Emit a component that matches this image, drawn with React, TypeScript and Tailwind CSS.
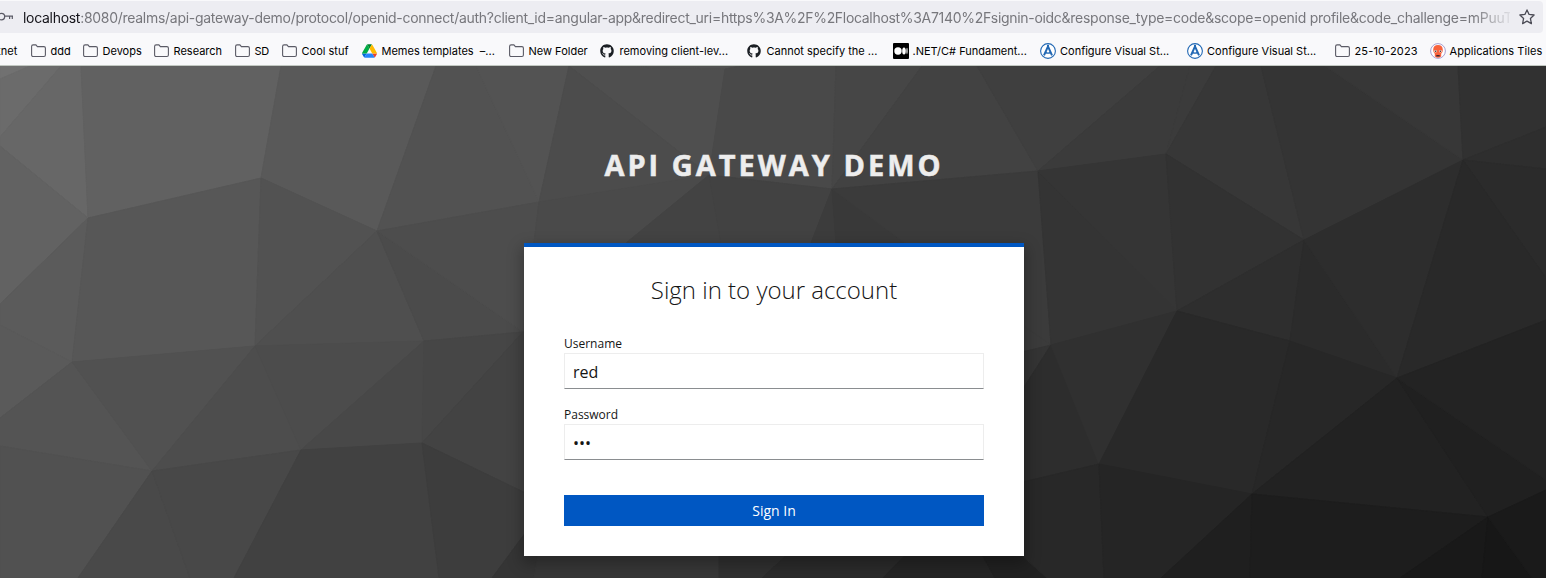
import type { ReactNode } from "react";
import { FaGithub } from "react-icons/fa";

type Facet = [string, string];

/* Low-poly backdrop, in page pixels below the toolbar (origin at y = 66). */
const facets: Facet[] = [
  ["#717171", "0,60 44,60 0,79"],
  ["#6b6b6b", "30,66 61,66 0,137 0,79"],
  ["#676767", "61,66 81,66 88,218 0,146 0,137"],
  ["#616161", "81,66 281,66 261,178 88,218"],
  ["#595959", "281,66 436,66 377,231 261,178"],
  ["#525252", "436,66 476,66 539,202 377,231"],
  ["#535353", "476,66 569,66 539,202"],
  ["#515151", "569,66 740,66 725,69"],
  ["#4f4f4f", "569,66 725,69 709,175"],
  ["#4c4c4c", "569,66 709,175 539,202"],
  ["#494949", "740,66 836,66 832,189 709,175 725,69"],
  ["#464646", "836,66 922,66 832,189"],
  ["#424242", "922,66 977,66 1038,171 832,189"],
  ["#3f3f3f", "977,66 1160,66 1038,171"],
  ["#3b3b3b", "1160,66 1190,66 1166,154 1038,171"],
  ["#3b3b3b", "1190,66 1216,66 1166,154"],
  ["#373737", "1216,66 1261,66 1304,240 1166,154"],
  ["#343434", "1261,66 1325,66 1463,160 1304,240"],
  ["#373737", "1325,66 1458,66 1463,160"],
  ["#313131", "1458,66 1546,66 1546,127 1463,160"],
  ["#2e2e2e", "1463,160 1546,127 1546,169"],
  ["#2b2b2b", "1463,160 1546,169 1546,278"],
  ["#626262", "0,146 88,218 0,304"],
  ["#5b5b5b", "88,218 72,362 0,325 0,304"],
  ["#575757", "88,218 261,178 255,346 72,362"],
  ["#525252", "261,178 377,231 255,346"],
  ["#4f4f4f", "377,231 424,341 255,346"],
  ["#4b4b4b", "377,231 523,332 424,341"],
  ["#4d4d4d", "377,231 539,202 523,332"],
  ["#4a4a4a", "539,202 709,175 626,243 523,332"],
  ["#434343", "709,175 721,243 626,243"],
  ["#424242", "709,175 832,189 811,243 721,243"],
  ["#3c3c3c", "832,189 836,243 811,243"],
  ["#393939", "832,189 905,243 836,243"],
  ["#3b3b3b", "832,189 1038,171 1051,345 905,243"],
  ["#343434", "1038,171 1177,311 1051,345"],
  ["#353535", "1038,171 1166,154 1177,311"],
  ["#323232", "1166,154 1304,240 1177,311"],
  ["#2e2e2e", "1304,240 1290,341 1177,311"],
  ["#2b2b2b", "1304,240 1397,378 1290,341"],
  ["#2d2d2d", "1304,240 1463,160 1397,378"],
  ["#292929", "1463,160 1546,278 1546,320 1397,378"],
  ["#5a5a5a", "0,325 72,362 0,418"],
  ["#545454", "72,362 152,471 0,446 0,418"],
  ["#515151", "72,362 255,346 152,471"],
  ["#4d4d4d", "255,346 301,450 152,471"],
  ["#4c4c4c", "255,346 424,341 301,450"],
  ["#484848", "424,341 422,443 301,450"],
  ["#464646", "424,341 523,332 422,443"],
  ["#434343", "523,332 540,332 540,500 422,443"],
  ["#515151", "0,446 152,471 78,578 0,578"],
  ["#494949", "152,471 190,578 78,578"],
  ["#484848", "152,471 301,450 234,578 190,578"],
  ["#414141", "301,450 422,443 439,578 234,578"],
  ["#3d3d3d", "422,443 540,500 540,513 492,578 439,578"],
  ["#353535", "540,513 540,540 534,578 492,578"],
  ["#373737", "540,540 719,540 719,578 534,578"],
  ["#303030", "719,540 803,540 762,578 719,578"],
  ["#2b2b2b", "803,540 920,540 883,578 762,578"],
  ["#252525", "920,540 974,540 995,578 883,578"],
  ["#212121", "974,540 1006,540 1047,578 995,578"],
  ["#343434", "1010,355 1051,345 1010,409"],
  ["#2d2d2d", "1051,345 1099,464 1010,485 1010,409"],
  ["#303030", "1051,345 1177,311 1099,464"],
  ["#292929", "1177,311 1290,341 1252,494 1099,464"],
  ["#272727", "1290,341 1397,378 1252,494"],
  ["#222222", "1397,378 1488,517 1252,494"],
  ["#202020", "1397,378 1546,480 1546,490 1488,517"],
  ["#232323", "1397,378 1546,320 1546,480"],
  ["#282828", "1010,485 1099,464 1104,578 1047,578 1010,545"],
  ["#252525", "1099,464 1252,494 1161,578 1104,578"],
  ["#1f1f1f", "1252,494 1250,578 1161,578"],
  ["#1d1d1d", "1252,494 1488,517 1400,578 1250,578"],
  ["#191919", "1488,517 1482,578 1400,578"],
  ["#171717", "1488,517 1532,578 1482,578"],
  ["#1a1a1a", "1488,517 1546,490 1546,578 1532,578"],
];

function Backdrop() {
  return (
    <svg
      className="absolute inset-x-0 top-0 h-full w-full"
      viewBox="0 66 1546 512"
      preserveAspectRatio="none"
      aria-hidden="true"
    >
      <rect x="0" y="66" width="1546" height="512" fill="#3b3b3b" />
      {facets.map(([fill, points]) => (
        <polygon key={points} points={points} fill={fill} stroke={fill} strokeWidth="1" />
      ))}
    </svg>
  );
}

function FolderIcon() {
  return (
    <svg className="h-[14px] w-[15px] shrink-0" viewBox="0 0 15 14" fill="none" stroke="#5b5b66" strokeWidth="1.1">
      <path d="M.6 11V2.4Q.6 .9 2.1 .9H4.9L6.4 2.6H12.9Q14.4 2.6 14.4 4.1V11Q14.4 12.5 12.9 12.5H2.1Q.6 12.5 .6 11Z" />
    </svg>
  );
}

function DriveIcon() {
  return (
    <svg className="h-[14px] w-[15px] shrink-0" viewBox="0 0 87.3 78">
      <path d="m6.6 66.85 3.85 6.65c.8 1.4 1.95 2.5 3.3 3.3l13.75-23.8h-27.5c0 1.55.4 3.1 1.2 4.5z" fill="#0066da" />
      <path d="m43.65 25-13.75-23.8c-1.35.8-2.5 1.9-3.3 3.3l-25.4 44a9.06 9.06 0 0 0 -1.2 4.5h27.5z" fill="#00ac47" />
      <path d="m73.55 76.8c1.35-.8 2.5-1.9 3.3-3.3l1.6-2.75 7.65-13.25c.8-1.4 1.2-2.95 1.2-4.5h-27.5l5.85 11.5z" fill="#ea4335" />
      <path d="m43.65 25 13.75-23.8c-1.35-.8-2.9-1.2-4.5-1.2h-18.5c-1.6 0-3.15.45-4.5 1.2z" fill="#00832d" />
      <path d="m59.8 53h-32.3l-13.75 23.8c1.35.8 2.9 1.2 4.5 1.2h50.8c1.6 0 3.15-.45 4.5-1.2z" fill="#2684fc" />
      <path d="m73.4 26.5-12.7-22c-.8-1.4-1.95-2.5-3.3-3.3l-13.75 23.8 16.15 28h27.45c0-1.55-.4-3.1-1.2-4.5z" fill="#ffba00" />
    </svg>
  );
}

function MediumIcon() {
  return (
    <svg className="h-4 w-4 shrink-0" viewBox="0 0 16 16">
      <rect width="16" height="16" rx="1" fill="#000" />
      <circle cx="5" cy="8" r="3.7" fill="#fff" />
      <ellipse cx="11" cy="8" rx="1.8" ry="3.6" fill="#fff" />
      <ellipse cx="14" cy="8" rx=".6" ry="3.2" fill="#fff" />
    </svg>
  );
}

function CompassIcon() {
  return (
    <svg className="h-4 w-4 shrink-0" viewBox="0 0 16 16" fill="none" stroke="#2268b4">
      <circle cx="8" cy="8" r="7.4" strokeWidth="1.1" fill="#fff" />
      <path d="M4 12.4 8 3.4 12 12.4" strokeWidth="2" />
      <path d="M5.4 9.3Q8 10.9 10.6 9.3" strokeWidth="1.4" />
      <path d="M8 2V5" strokeWidth="2" />
    </svg>
  );
}

function MascotIcon() {
  return (
    <svg className="h-4 w-4 shrink-0" viewBox="0 0 16 16">
      <circle cx="8" cy="8" r="7.4" fill="#fff" stroke="#9d93c8" strokeWidth=".9" />
      <path d="M3.2 7Q3.2 2 8 2T12.8 7Q12.8 9.8 11.2 10.8V13.4Q8 16 4.8 13.4V10.8Q3.2 9.8 3.2 7Z" fill="#f8623c" />
      <circle cx="5.5" cy="8.3" r="1.3" fill="#fbe3dc" />
      <circle cx="10.5" cy="8.3" r="1.3" fill="#fbe3dc" />
      <circle cx="5.6" cy="8.3" r=".8" fill="#333" />
      <circle cx="10.4" cy="8.3" r=".8" fill="#333" />
      <rect x="6.2" y="12" width="3.6" height="1.6" rx=".6" fill="#3a2a35" />
    </svg>
  );
}

function Bookmark({ icon, label, width, track }: { icon: ReactNode; label: string; width: string; track: string }) {
  return (
    <div className={`flex shrink-0 items-center ${width}`}>
      <span className="flex w-[19.5px] shrink-0 items-center">{icon}</span>
      <span className={`whitespace-pre ${track}`}>{label}</span>
    </div>
  );
}

function Toolbar() {
  return (
    <header className="h-[66px] shrink-0 overflow-hidden border-b border-[#c2c8c2] bg-[#f9f9fb] font-['Inter','Liberation_Sans',sans-serif] text-black">
      <div className="pt-px">
        <div className="flex h-8 w-[1543px] items-center overflow-hidden rounded-r-[4px] bg-[#ededf2]">
          <svg className="h-[10px] w-[23px] shrink-0" viewBox="0 0 23 10" fill="none" stroke="#5b5b66" strokeWidth="1.2">
            <circle cx="1.4" cy="4.6" r="3.3" />
            <path d="M4.7 4.2H13M9.6 4.2V7M12.3 4.2V7" />
          </svg>
          <div className="w-[1487px] shrink-0 overflow-hidden whitespace-nowrap pt-[2px] text-[14px] leading-5 tracking-[-0.28px] text-[#77777c] [mask-image:linear-gradient(to_right,black_1450px,transparent_1492px)]">
            <span className="tracking-[-0.3px] text-[#15141a]">localhost</span>
            :8080/realms/api-gateway-demo/protocol/openid-connect/auth?client_id=angular-app&amp;redirect_uri=
            <span className="tracking-[-0.31px]">https%3A%2F%2Flocalhost%3A7140%2Fsignin-oidc</span>
            <span className="tracking-[-0.26px]">&amp;response_type=code&amp;scope=openid profile&amp;code_challenge=mPuuT</span>
          </div>
          <svg className="ml-[9px] h-4 w-4 shrink-0" viewBox="0 0 16 16" fill="none" stroke="#4b4b55" strokeWidth="1.3" strokeLinejoin="round">
            <path d="M8 .9 10.1 5.4 15.1 6 11.4 9.4 12.4 14.6 8 12.1 3.6 14.6 4.6 9.4.9 6 5.9 5.4Z" />
          </svg>
        </div>
      </div>
      <nav className="flex h-[36px] items-center text-[11px] leading-4">
        <span className="w-[31px] shrink-0 whitespace-nowrap tracking-[0.1px]">
          <span className="-ml-[3px]">tnet</span>
        </span>
        <Bookmark icon={<FolderIcon />} label="ddd" width="w-[52px]" track="tracking-[0px]" />
        <Bookmark icon={<FolderIcon />} label="Devops" width="w-[71px]" track="tracking-[0px]" />
        <Bookmark icon={<FolderIcon />} label="Research" width="w-[81px]" track="tracking-[0px]" />
        <Bookmark icon={<FolderIcon />} label="SD" width="w-[47px]" track="tracking-[-0.2px]" />
        <Bookmark icon={<FolderIcon />} label="Cool stuf" width="w-[80px]" track="tracking-[0px]" />
        <Bookmark icon={<DriveIcon />} label="Memes templates  –..." width="w-[147px]" track="tracking-[0px]" />
        <Bookmark icon={<FolderIcon />} label="New Folder" width="w-[91px]" track="tracking-[0px]" />
        <Bookmark icon={<FaGithub className="h-[14px] w-[14px] text-[#1b1f24]" />} label="removing client-lev..." width="w-[147px]" track="tracking-[0px]" />
        <Bookmark icon={<FaGithub className="h-[14px] w-[14px] text-[#1b1f24]" />} label="Cannot specify the ..." width="w-[146px]" track="tracking-[0px]" />
        <Bookmark icon={<MediumIcon />} label=".NET/C# Fundament..." width="w-[147px]" track="tracking-[0px]" />
        <Bookmark icon={<CompassIcon />} label="Configure Visual St..." width="w-[147px]" track="pl-[0.5px] tracking-[0px]" />
        <Bookmark icon={<CompassIcon />} label="Configure Visual St..." width="w-[148px]" track="pl-[0.5px] tracking-[0px]" />
        <Bookmark icon={<FolderIcon />} label="25-10-2023" width="w-[95px]" track="tracking-[0.15px]" />
        <Bookmark icon={<MascotIcon />} label="Applications Tiles" width="w-[116px]" track="tracking-[0.05px]" />
      </nav>
    </header>
  );
}

function Field({ id, label, type, value }: { id: string; label: string; type: string; value: string }) {
  return (
    <div>
      <label htmlFor={id} className="block h-[18px] text-[12px] leading-[18px] text-[#151515]">
        {label}
      </label>
      <input
        id={id}
        type={type}
        defaultValue={value}
        className="block h-9 w-full border border-[#ededed] border-b-[#8a8d90] bg-white px-2 pb-0 pt-[2px] text-[16px] text-[#151515] outline-none"
      />
    </div>
  );
}

export default function App() {
  return (
    <div className="flex h-[578px] w-[1546px] flex-col overflow-hidden">
      <Toolbar />
      <main className="relative flex-1 font-['Open_Sans','Noto_Sans',sans-serif]">
        <Backdrop />
        <div className="relative flex flex-col items-center pl-[2px]">
          <h1 className="mt-[79px] h-10 text-[29px] font-bold uppercase leading-10 tracking-[3px] text-[#ededed] [-webkit-text-stroke:0.5px_#ededed]">
            API Gateway Demo
          </h1>
          <section className="mt-[58px] h-[313px] w-[500px] border-t-4 border-[#0057c2] bg-white px-10 shadow-[0_6px_14px_2px_rgba(0,0,0,0.28)]">
            <h2 className="mt-[27px] h-8 text-center text-[24px] font-light leading-8 text-[#151515]">
              Sign in to your account
            </h2>
            <form className="mt-[29px] flex flex-col" onSubmit={(e) => e.preventDefault()}>
              <Field id="username" label="Username" type="text" value="red" />
              <div className="h-[17px]" />
              <Field id="password" label="Password" type="password" value="red" />
              <button type="submit" className="mt-[35px] h-[31px] w-full bg-[#0057c2] text-[14px] leading-[31px] text-white">
                Sign In
              </button>
            </form>
          </section>
        </div>
      </main>
    </div>
  );
}
